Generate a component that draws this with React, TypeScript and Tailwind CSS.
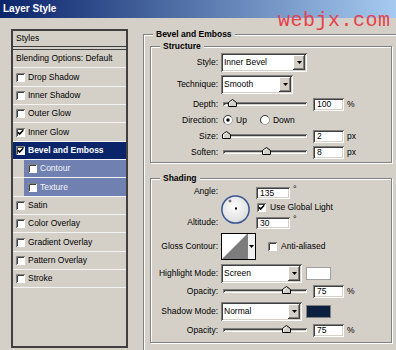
import React from "react";

const sunken =
  "shadow-[inset_1px_1px_0_#808080,inset_-1px_-1px_0_#ffffff,inset_2px_2px_0_#404040,inset_-2px_-2px_0_#d4d0c8]";
const raised =
  "shadow-[inset_-1px_-1px_0_#404040,inset_1px_1px_0_#ffffff,inset_-2px_-2px_0_#808080]";
const etched =
  "border border-[#808080] shadow-[inset_1px_1px_0_#ffffff,1px_1px_0_#ffffff]";

function CheckBox({ checked, className = "" }: { checked?: boolean; className?: string }) {
  return (
    <svg width="9" height="9" viewBox="0 0 9 9" className={"shrink-0 " + className}>
      <rect x="0" y="0" width="9" height="9" fill="#ffffff" />
      <path d="M0.5 9V0.5H9" stroke="#808080" fill="none" />
      <path d="M1.5 8V1.5H8" stroke="#404040" fill="none" />
      {checked && (
        <path d="M2 4.2L3.6 6L7.2 2.3" stroke="#000000" strokeWidth="1.6" fill="none" />
      )}
    </svg>
  );
}

function Radio({ on, className = "" }: { on?: boolean; className?: string }) {
  return (
    <svg width="10" height="10" viewBox="0 0 10 10" className={"shrink-0 " + className}>
      <circle cx="5" cy="5" r="4.5" fill="#ffffff" stroke="#a0a0a0" />
      <path d="M1.8 8.2A4.5 4.5 0 0 1 8.2 1.8" stroke="#404040" fill="none" />
      {on && <circle cx="5" cy="5" r="1.7" fill="#000000" />}
    </svg>
  );
}

function Arrow() {
  return (
    <svg width="5" height="3" viewBox="0 0 5 3">
      <path d="M0 0H5L2.5 3Z" fill="#000000" />
    </svg>
  );
}

function Select({ value, w }: { value: string; w: string }) {
  return (
    <div className={"h-[19px] bg-white flex items-stretch p-[2px] " + sunken + " " + w}>
      <span className="flex-1 pl-[1px] flex items-center">{value}</span>
      <div className={"w-[12px] bg-[#d4d0c8] flex items-center justify-center " + raised}>
        <Arrow />
      </div>
    </div>
  );
}

function NumInput({ v, w = "w-[31px]", h = "h-[13px]", className = "" }: { v: string; w?: string; h?: string; className?: string }) {
  return (
    <div className={"bg-white flex items-center pl-[4px] " + sunken + " " + w + " " + h + " " + className}>
      {v}
    </div>
  );
}

function Slider({ pos }: { pos: number }) {
  return (
    <div
      className={
        "relative w-[84px] h-[4px] ml-[2px] bg-[#d4d0c8] shadow-[inset_1px_1px_0_#808080,inset_-1px_-1px_0_#ffffff,inset_2px_2px_0_#404040]"
      }
    >
      <svg className="absolute top-[-3px]" style={{ left: pos }} width="9" height="8" viewBox="0 0 9 8">
        <path d="M0.5 7.5V3.5L4.5 0.5L8.5 3.5V7.5Z" fill="#d4d0c8" stroke="#000000" />
        <path d="M1.5 6.5V3.9L4.5 1.7" stroke="#ffffff" fill="none" />
      </svg>
    </div>
  );
}

function Row({ label, className = "", children }: { label: string; className?: string; children?: React.ReactNode }) {
  return (
    <div className={"flex items-center " + className}>
      <div className="w-[67px] text-right shrink-0">{label}</div>
      <div className="ml-[3px] flex items-center">{children}</div>
    </div>
  );
}

function SliderRow({ label, pos, v, unit, className = "" }: { label: string; pos: number; v: string; unit: string; className?: string }) {
  return (
    <Row label={label} className={"h-[16px] " + className}>
      <Slider pos={pos} />
      <NumInput v={v} className="ml-[6px]" />
      <span className="ml-[3px]">{unit}</span>
    </Row>
  );
}

type Item = { label: string; h: string; checkbox?: boolean; checked?: boolean; sel?: boolean; sub?: boolean };

const items: Item[] = [
  { label: "Blending Options: Default", h: "h-[18px]" },
  { label: "Drop Shadow", h: "h-[19px]", checkbox: true },
  { label: "Inner Shadow", h: "h-[18px]", checkbox: true },
  { label: "Outer Glow", h: "h-[18px]", checkbox: true },
  { label: "Inner Glow", h: "h-[19px]", checkbox: true, checked: true },
  { label: "Bevel and Emboss", h: "h-[18px]", checkbox: true, checked: true, sel: true },
  { label: "Contour", h: "h-[18px]", checkbox: true, sub: true },
  { label: "Texture", h: "h-[19px]", checkbox: true, sub: true },
  { label: "Satin", h: "h-[18px]", checkbox: true },
  { label: "Color Overlay", h: "h-[18px]", checkbox: true },
  { label: "Gradient Overlay", h: "h-[19px]", checkbox: true },
  { label: "Pattern Overlay", h: "h-[18px]", checkbox: true },
  { label: "Stroke", h: "h-[18px]", checkbox: true },
];

function ListRow({ it }: { it: Item }) {
  if (it.sub) {
    return (
      <div className={"border-b border-[#f4f4f4] pl-[11px] flex " + it.h}>
        <div className="flex-1 bg-[#7080b0] text-[#f4f6fb] flex items-center pl-[4px]">
          <CheckBox />
          <span className="ml-[3px]">{it.label}</span>
        </div>
      </div>
    );
  }
  return (
    <div
      className={
        "border-b border-[#f4f4f4] flex items-center pl-[3px] " +
        it.h +
        (it.sel ? " bg-[#0a246a] text-white font-bold" : "")
      }
    >
      {it.checkbox && <CheckBox checked={it.checked} />}
      <span className={it.checkbox ? "ml-[3px]" : ""}>{it.label}</span>
    </div>
  );
}

export default function App() {
  return (
    <div className="w-[396px] h-[350px] overflow-hidden relative bg-[#d4d0c8] font-['Liberation_Sans',Arial,sans-serif] text-[8.5px] leading-none text-black">
      <div className="h-[18px] bg-[linear-gradient(to_right,#0a246a,#a6caf0)] text-white font-bold text-[10px] flex items-center pl-[3px]">
        Layer Style
      </div>
      <div className="absolute left-[278px] top-[11px] font-['Liberation_Mono',monospace] text-[20px] leading-[20px] tracking-[0.5px] text-[#e5414c]">
        webjx.com
      </div>

      <div className="flex items-start">
        {/* Left list */}
        <div className="ml-[11px] mt-[11px] w-[117px] h-[319px] shrink-0 border-2 border-[#404040] flex flex-col">
          <div className="h-[19px] flex items-center pl-[3px] border-b-4 border-double border-[#404040]">
            Styles
          </div>
          {items.map((it) => (
            <ListRow key={it.label} it={it} />
          ))}
        </div>

        {/* Right panel */}
        <div className={"relative ml-[15px] mt-[16px] w-[262px] h-[340px] shrink-0 pl-[6px] " + etched}>
          <span className="absolute top-[-6px] left-[9px] px-[3px] bg-[#d4d0c8] font-bold leading-[11px]">
            Bevel and Emboss
          </span>

          {/* Structure */}
          <div className={"relative mt-[11px] w-[242px] h-[117px] pt-[6px] " + etched}>
            <span className="absolute top-[-6px] left-[9px] px-[3px] bg-[#d4d0c8] font-bold leading-[11px]">
              Structure
            </span>
            <Row label="Style:" className="h-[19px]">
              <Select value="Inner Bevel" w="w-[86px]" />
            </Row>
            <Row label="Technique:" className="h-[19px] mt-[3px]">
              <Select value="Smooth" w="w-[72px]" />
            </Row>
            <SliderRow label="Depth:" pos={5} v="100" unit="%" className="mt-[2px]" />
            <Row label="Direction:" className="h-[16px]">
              <Radio on className="ml-[2px]" />
              <span className="ml-[3px]">Up</span>
              <Radio className="ml-[13px]" />
              <span className="ml-[3px]">Down</span>
            </Row>
            <SliderRow label="Size:" pos={-1} v="2" unit="px" />
            <SliderRow label="Soften:" pos={39} v="8" unit="px" />
          </div>

          {/* Shading */}
          <div className={"relative mt-[15px] w-[242px] h-[165px] pt-[6px] " + etched}>
            <span className="absolute top-[-6px] left-[9px] px-[3px] bg-[#d4d0c8] font-bold leading-[11px]">
              Shading
            </span>
            <div className="flex items-start h-[44px]">
              <div className="w-[67px] shrink-0 flex flex-col items-end">
                <div className="h-[12px] flex items-center">Angle:</div>
                <div className="h-[12px] mt-[19px] flex items-center">Altitude:</div>
              </div>
              <svg className="ml-[3px] mt-[10px] shrink-0" width="29" height="29" viewBox="0 0 29 29">
                <defs>
                  <radialGradient id="dial" cx="45%" cy="40%" r="60%">
                    <stop offset="0%" stopColor="#ffffff" />
                    <stop offset="100%" stopColor="#dcdcdc" />
                  </radialGradient>
                </defs>
                <circle cx="14.5" cy="14.5" r="13.6" fill="url(#dial)" stroke="#3a5794" strokeWidth="1.5" />
                <path d="M9 4.5V7.5M7.5 6H10.5" stroke="#333333" strokeWidth="0.8" />
                <rect x="14" y="12.5" width="2" height="2" fill="#000000" />
              </svg>
              <div className="ml-[6px] flex flex-col">
                <div className="flex items-start mt-[2px]">
                  <NumInput v="135" w="w-[34px]" h="h-[12px]" />
                  <span className="ml-[3px] text-[9px] -mt-[2px]">°</span>
                </div>
                <div className="flex items-center mt-[3px] h-[10px]">
                  <CheckBox checked className="ml-[1px]" />
                  <span className="ml-[4px]">Use Global Light</span>
                </div>
                <div className="flex items-start mt-[5px]">
                  <NumInput v="30" w="w-[34px]" h="h-[12px]" />
                  <span className="ml-[3px] text-[9px] -mt-[2px]">°</span>
                </div>
              </div>
            </div>
            <Row label="Gloss Contour:" className="h-[27px] mt-[4px]">
              <div className="flex w-[35px] h-[27px] border border-black bg-white">
                <svg width="25" height="25" viewBox="0 0 25 25" className="shrink-0">
                  <rect width="25" height="25" fill="#ffffff" />
                  <path d="M0 25L25 0V25Z" fill="#7c7c7c" />
                </svg>
                <div className="flex-1 border-l border-[#808080] bg-[#f0f0f0] flex items-center justify-center">
                  <Arrow />
                </div>
              </div>
              <CheckBox className="ml-[12px]" />
              <span className="ml-[4px]">Anti-aliased</span>
            </Row>
            <Row label="Highlight Mode:" className="h-[19px] mt-[4px]">
              <Select value="Screen" w="w-[81px]" />
              <div className="ml-[4px] w-[25px] h-[13px] bg-white border border-[#a0a0a0]" />
            </Row>
            <SliderRow label="Opacity:" pos={59} v="75" unit="%" />
            <Row label="Shadow Mode:" className="h-[19px] mt-[3px]">
              <Select value="Normal" w="w-[81px]" />
              <div className="ml-[4px] w-[25px] h-[13px] bg-[#0c1f3e] border border-[#808080]" />
            </Row>
            <SliderRow label="Opacity:" pos={59} v="75" unit="%" className="mt-[1px]" />
          </div>
        </div>
      </div>
    </div>
  );
}
